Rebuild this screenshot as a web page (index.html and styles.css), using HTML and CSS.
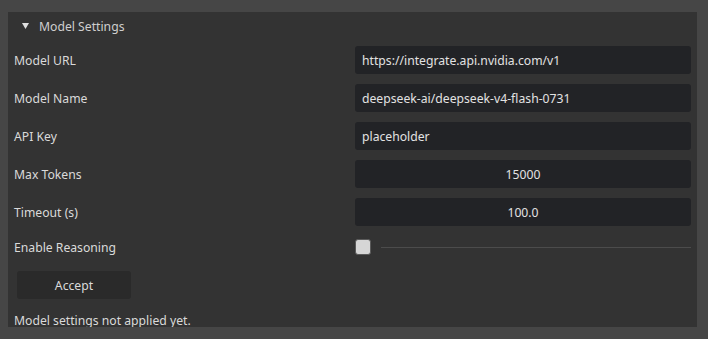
FILE: index.html
```html
<!DOCTYPE html>
<html lang="en">
<head>
  <meta charset="UTF-8" />
  <title>Model Settings</title>
  <link rel="stylesheet" href="styles.css">
</head>
<body>
  <div class="panel">
    <!-- header -->
    <div class="panel-head">
      <svg class="arrow" width="7" height="6" viewBox="0 0 7 6"><path d="M0 0H7L3.5 6Z" fill="#e0e0e0"/></svg>
      <span>Model Settings</span>
    </div>

    <!-- settings grid -->
    <div class="settings">
      <div class="label">Model URL</div>
      <div class="field">https://integrate.api.nvidia.com/v1</div>

      <div class="label">Model Name</div>
      <div class="field">deepseek-ai/deepseek-v4-flash-0731</div>

      <div class="label">API Key</div>
      <div class="field">placeholder</div>

      <div class="label">Max Tokens</div>
      <div class="field num">15000</div>

      <div class="label">Timeout (s)</div>
      <div class="field num">100.0</div>

      <div class="label check-label">Enable Reasoning</div>
      <div class="check-row">
        <span class="checkbox"></span>
        <span class="rule"></span>
      </div>
    </div>

    <button class="accept">Accept</button>
    <div class="status">Model settings not applied yet.</div>
  </div>
</body>
</html>
```

FILE: styles.css
```css
body {
  margin: 0;
  padding: 12px 11px 0 8px;
  background: #464646;
  font-family: 'Noto Sans', sans-serif;
  font-size: 12.2px;
  color: #dadada;
}

.panel {
  background: #333333;
  height: 315px;
  box-sizing: border-box;
  padding: 0 6px 0 6px;
}

.panel-head {
  height: 28px;
  display: flex;
  align-items: center;
  padding-left: 8px;
  gap: 10px;
  color: #cfcfcf;
}

.settings {
  display: grid;
  grid-template-columns: 341px 336px;
  row-gap: 10px;
  margin-top: 6px;
}
.label {
  display: flex;
  align-items: center;
  height: 28px;
}
.field {
  height: 28px;
  background: #222326;
  border-radius: 3px;
  display: flex;
  align-items: center;
  padding-left: 7px;
  color: #e2e2e2;
}
.field.num {
  justify-content: center;
  padding-left: 0;
}

.check-label, .check-row {
  height: 22px;
}
.check-row {
  display: flex;
  align-items: center;
  gap: 10px;
}
.checkbox {
  width: 14px;
  height: 14px;
  background: #d6d6d6;
  border: 1px solid #5a5a5a;
  border-radius: 3px;
  flex: none;
}
.rule {
  flex: 1;
  height: 1px;
  background: #4c4c4c;
}

.accept {
  display: block;
  margin: 13px 0 0 3px;
  width: 114px;
  height: 28px;
  background: #2a2a2a;
  border: none;
  border-radius: 3px;
  font-family: inherit;
  font-size: 12.2px;
  color: #dadada;
}

.status {
  margin-top: 14px;
  line-height: 16px;
}
```
